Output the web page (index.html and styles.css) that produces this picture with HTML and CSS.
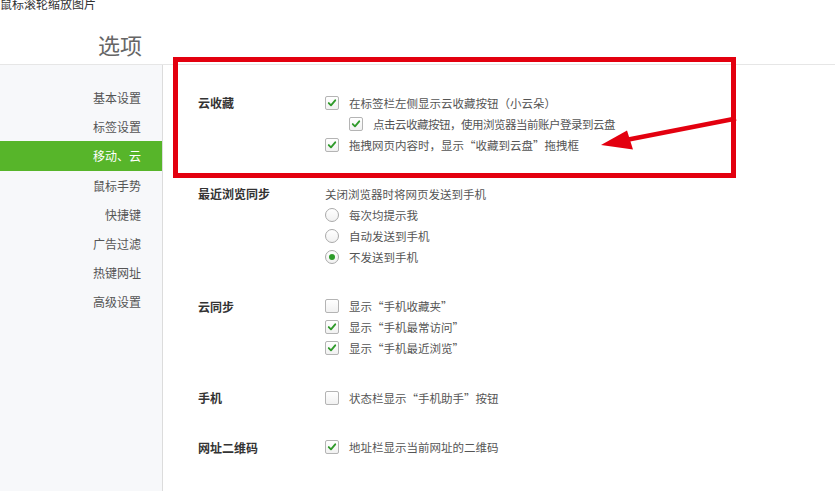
FILE: index.html
```html
<!DOCTYPE html>
<html lang="zh-CN">
<head>
<meta charset="utf-8">
<title>选项</title>
<link rel="stylesheet" href="styles.css">
</head>
<body>
<div class="caption">鼠标滚轮缩放图片</div>
<div class="header"><span class="title">选项</span></div>
<div class="main">
  <nav class="sidebar">
    <div class="nav-item">基本设置</div>
    <div class="nav-item">标签设置</div>
    <div class="nav-item active">移动、云</div>
    <div class="nav-item">鼠标手势</div>
    <div class="nav-item">快捷键</div>
    <div class="nav-item">广告过滤</div>
    <div class="nav-item">热键网址</div>
    <div class="nav-item">高级设置</div>
  </nav>
  <section class="content">
    <div class="label">云收藏</div>
    <div class="options">
      <div class="opt"><span class="cb on"><svg viewBox="0 0 13 13"><path d="M3 6.6 L5.4 9 L10 3.6"/></svg></span>在标签栏左侧显示云收藏按钮（小云朵）</div>
      <div class="opt sub"><span class="cb on"><svg viewBox="0 0 13 13"><path d="M3 6.6 L5.4 9 L10 3.6"/></svg></span><span class="tight">点击云收藏按钮，使用浏览器当前账户登录到云盘</span></div>
      <div class="opt"><span class="cb on"><svg viewBox="0 0 13 13"><path d="M3 6.6 L5.4 9 L10 3.6"/></svg></span>拖拽网页内容时，显示“收藏到云盘”拖拽框</div>
    </div>

    <div class="label">最近浏览同步</div>
    <div class="options">
      <div class="opt plain">关闭浏览器时将网页发送到手机</div>
      <div class="opt"><span class="rd"></span>每次均提示我</div>
      <div class="opt"><span class="rd"></span>自动发送到手机</div>
      <div class="opt"><span class="rd on"></span>不发送到手机</div>
    </div>

    <div class="label">云同步</div>
    <div class="options">
      <div class="opt"><span class="cb"></span>显示“手机收藏夹”</div>
      <div class="opt"><span class="cb on"><svg viewBox="0 0 13 13"><path d="M3 6.6 L5.4 9 L10 3.6"/></svg></span>显示“手机最常访问”</div>
      <div class="opt"><span class="cb on"><svg viewBox="0 0 13 13"><path d="M3 6.6 L5.4 9 L10 3.6"/></svg></span>显示“手机最近浏览”</div>
    </div>

    <div class="label">手机</div>
    <div class="options">
      <div class="opt"><span class="cb"></span>状态栏显示“手机助手”按钮</div>
    </div>

    <div class="label">网址二维码</div>
    <div class="options">
      <div class="opt"><span class="cb on"><svg viewBox="0 0 13 13"><path d="M3 6.6 L5.4 9 L10 3.6"/></svg></span>地址栏显示当前网址的二维码</div>
    </div>
  </section>
</div>
<div class="highlight"></div>
<svg class="arrow" viewBox="0 0 150 55" width="150" height="55">
  <line x1="146" y1="13.5" x2="36" y2="35" />
  <polygon points="11,40 37,25.5 43,44.5" />
</svg>
</body>
</html>
```

FILE: styles.css
```css
* { box-sizing: border-box; }
html, body { margin: 0; padding: 0; background: #fff; }
body {
  font-family: "Noto Sans CJK SC", "Noto Sans", "Liberation Sans", sans-serif;
  color: #333;
  position: relative;
  height: 491px;
  overflow: hidden;
}
.caption {
  font-size: 12px;
  line-height: 12px;
  height: 12px;
  margin-top: -2px;
  margin-bottom: -1px;
  color: #333;
}
.header {
  padding: 20px 0 5px 98px;
  border-bottom: 1px solid #e6e6e6;
}
.title {
  display: block;
  font-size: 22px;
  line-height: 30px;
  color: #666;
}
.main {
  display: flex;
  height: 426px;
}
.sidebar {
  width: 163px;
  flex: none;
  background: #f7f8fa;
  border-right: 1px solid #dcdcdc;
  padding-top: 18px;
}
.nav-item {
  height: 29.2px;
  line-height: 29px;
  text-align: right;
  padding-right: 21px;
  font-size: 12px;
  color: #555;
}
.nav-item.active {
  background: #57b52a;
  color: #fff;
}
.content {
  flex: 1;
  display: grid;
  grid-template-columns: 127px 1fr;
  grid-auto-rows: min-content;
  row-gap: 28.4px;
  padding: 27px 0 0 35px;
  align-content: start;
}
.label {
  font-size: 12px;
  font-weight: bold;
  line-height: 21px;
  color: #333;
}
.options { display: flex; flex-direction: column; }
.opt {
  display: flex;
  align-items: center;
  height: 21px;
  font-size: 11.5px;
  color: #555;
  white-space: nowrap;
}
.opt.sub { padding-left: 24px; }
.tight { letter-spacing: -0.5px; }
.cb, .rd {
  width: 14px;
  height: 14px;
  flex: none;
  margin-right: 10px;
  border: 1px solid #b4b4b4;
  background: linear-gradient(#fff, #f1f1f1);
  display: inline-flex;
  align-items: center;
  justify-content: center;
}
.cb { border-radius: 2px; }
.cb svg { width: 12px; height: 12px; }
.cb path {
  fill: none;
  stroke: #2f9a2a;
  stroke-width: 2;
  stroke-linecap: round;
  stroke-linejoin: round;
}
.rd { border-radius: 50%; border-color: #aaa; }
.rd.on::after {
  content: "";
  width: 6px;
  height: 6px;
  border-radius: 50%;
  background: #2e9c2a;
}
.highlight {
  position: absolute;
  left: 173px;
  top: 57px;
  width: 563px;
  height: 121px;
  border: 5px solid #e3000f;
}
.arrow {
  position: absolute;
  left: 590px;
  top: 105px;
}
.arrow line { stroke: #e3000f; stroke-width: 4.5; }
.arrow polygon { fill: #e3000f; }
```
